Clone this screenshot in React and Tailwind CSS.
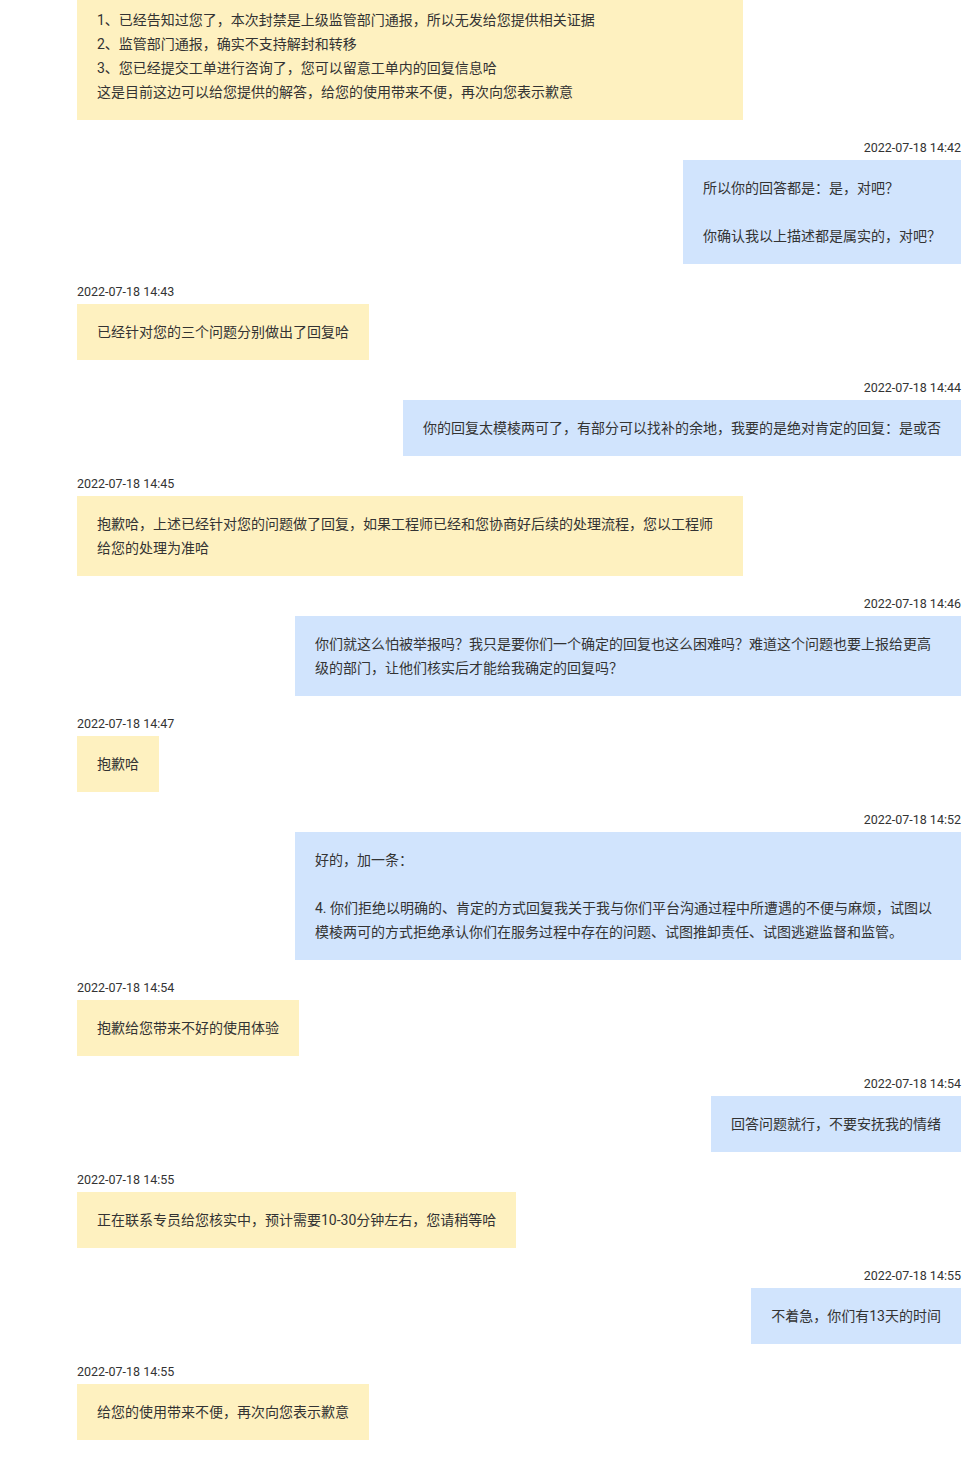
import React from 'react'

const messages = [
  {
    side: 'left',
    wide: true,
    lines: [
      '1、已经告知过您了，本次封禁是上级监管部门通报，所以无发给您提供相关证据',
      '2、监管部门通报，确实不支持解封和转移',
      '3、您已经提交工单进行咨询了，您可以留意工单内的回复信息哈',
      '这是目前这边可以给您提供的解答，给您的使用带来不便，再次向您表示歉意',
    ],
  },
  { side: 'right', time: '2022-07-18 14:42', lines: ['所以你的回答都是：是，对吧？', '', '你确认我以上描述都是属实的，对吧？'] },
  { side: 'left', time: '2022-07-18 14:43', lines: ['已经针对您的三个问题分别做出了回复哈'] },
  { side: 'right', time: '2022-07-18 14:44', lines: ['你的回复太模棱两可了，有部分可以找补的余地，我要的是绝对肯定的回复：是或否'] },
  {
    side: 'left',
    time: '2022-07-18 14:45',
    lines: ['抱歉哈，上述已经针对您的问题做了回复，如果工程师已经和您协商好后续的处理流程，您以工程师给您的处理为准哈'],
  },
  {
    side: 'right',
    time: '2022-07-18 14:46',
    lines: ['你们就这么怕被举报吗？我只是要你们一个确定的回复也这么困难吗？难道这个问题也要上报给更高级的部门，让他们核实后才能给我确定的回复吗？'],
  },
  { side: 'left', time: '2022-07-18 14:47', lines: ['抱歉哈'] },
  {
    side: 'right',
    time: '2022-07-18 14:52',
    lines: [
      '好的，加一条：',
      '',
      '4. 你们拒绝以明确的、肯定的方式回复我关于我与你们平台沟通过程中所遭遇的不便与麻烦，试图以模棱两可的方式拒绝承认你们在服务过程中存在的问题、试图推卸责任、试图逃避监督和监管。',
    ],
  },
  { side: 'left', time: '2022-07-18 14:54', lines: ['抱歉给您带来不好的使用体验'] },
  { side: 'right', time: '2022-07-18 14:54', lines: ['回答问题就行，不要安抚我的情绪'] },
  { side: 'left', time: '2022-07-18 14:55', lines: ['正在联系专员给您核实中，预计需要10-30分钟左右，您请稍等哈'] },
  { side: 'right', time: '2022-07-18 14:55', lines: ['不着急，你们有13天的时间'] },
  { side: 'left', time: '2022-07-18 14:55', lines: ['给您的使用带来不便，再次向您表示歉意'] },
]

function Message({ msg, first }) {
  const isRight = msg.side === 'right'
  return (
    <div className={`flex flex-col ${isRight ? 'items-end' : 'items-start'} ${first ? '' : 'mt-5'}`}>
      {msg.time && <div className="text-[12.5px] leading-4 mb-1 text-[#333]">{msg.time}</div>}
      <div
        className={`max-w-[666px] px-5 py-4 text-[14px] leading-6 text-[#333] ${
          isRight ? 'bg-[#d1e4fd]' : 'bg-[#fef1c0]'
        } ${msg.wide ? 'w-[666px]' : ''}`}
      >
        {msg.lines.map((line, i) => (
          <div key={i} className="min-h-6">
            {line}
          </div>
        ))}
      </div>
    </div>
  )
}

export default function App() {
  return (
    <div
      className="h-[1474px] w-[977px] overflow-hidden bg-white"
      style={{ fontFamily: 'Roboto, "Noto Sans CJK SC", sans-serif' }}
    >
      <div className="-mt-[8px] pl-[77px] pr-4 pb-8">
        {messages.map((m, i) => (
          <Message key={i} msg={m} first={i === 0} />
        ))}
      </div>
    </div>
  )
}
